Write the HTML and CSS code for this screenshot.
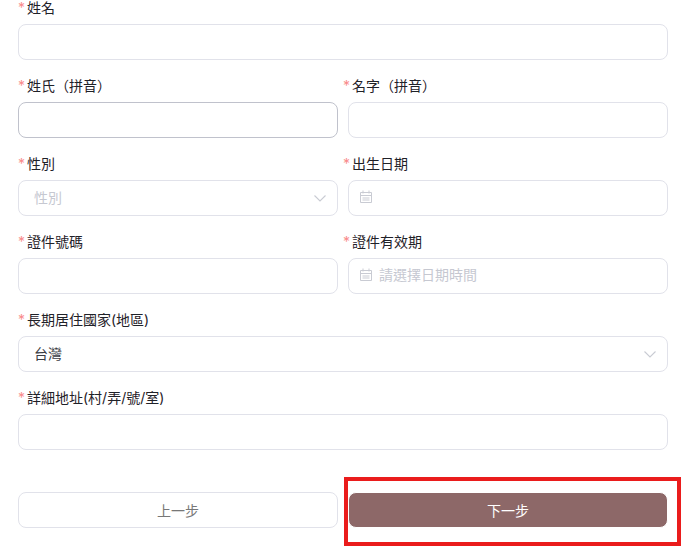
FILE: index.html
```html
<!DOCTYPE html>
<html lang="zh-Hant">
<head>
    <meta charset="UTF-8">
    <title>證件資料</title>
    <link rel="stylesheet" href="styles.css">
</head>
<body>
    <form class="form">
        <div class="field">
            <label class="label"><span class="req">*</span>姓名</label>
            <div class="box"></div>
        </div>
        <div class="row">
            <div class="field">
                <label class="label"><span class="req">*</span>姓氏（拼音）</label>
                <div class="box focus"></div>
            </div>
            <div class="field">
                <label class="label"><span class="req">*</span>名字（拼音）</label>
                <div class="box"></div>
            </div>
        </div>
        <div class="row">
            <div class="field">
                <label class="label"><span class="req">*</span>性別</label>
                <div class="box select">
                    <span class="placeholder">性別</span>
                    <svg class="chevron" width="14" height="14" viewBox="0 0 14 14" fill="none"><path d="M1.5 4.5L7 10l5.5-5.5" stroke="#c9cbd3" stroke-width="1.1"/></svg>
                </div>
            </div>
            <div class="field">
                <label class="label"><span class="req">*</span>出生日期</label>
                <div class="box date">
                    <svg class="cal" width="14" height="14" viewBox="0 0 14 14" fill="none"><path d="M1.5 2.5h11v10h-11zM1.5 5.5h11M4 .5v3M10 .5v3M3.5 8h7M3.5 10h7" stroke="#c9cbd3"/></svg>
                </div>
            </div>
        </div>
        <div class="row">
            <div class="field">
                <label class="label"><span class="req">*</span>證件號碼</label>
                <div class="box"></div>
            </div>
            <div class="field">
                <label class="label"><span class="req">*</span>證件有效期</label>
                <div class="box date">
                    <svg class="cal" width="14" height="14" viewBox="0 0 14 14" fill="none"><path d="M1.5 2.5h11v10h-11zM1.5 5.5h11M4 .5v3M10 .5v3M3.5 8h7M3.5 10h7" stroke="#c9cbd3"/></svg>
                    <span class="placeholder">請選擇日期時間</span>
                </div>
            </div>
        </div>
        <div class="field">
            <label class="label"><span class="req">*</span>長期居住國家(地區)</label>
            <div class="box select">
                <span class="value">台灣</span>
                <svg class="chevron" width="14" height="14" viewBox="0 0 14 14" fill="none"><path d="M1.5 4.5L7 10l5.5-5.5" stroke="#c9cbd3" stroke-width="1.1"/></svg>
            </div>
        </div>
        <div class="field">
            <label class="label"><span class="req">*</span>詳細地址(村/弄/號/室)</label>
            <div class="box"></div>
        </div>
        <div class="actions">
            <button type="button" class="btn prev">上一步</button>
            <div class="next-mark">
                <button type="button" class="btn next">下一步</button>
            </div>
        </div>
    </form>
</body>
</html>
```

FILE: styles.css
```css
html, body {
    margin: 0;
    padding: 0;
    background-color: #fff;
}
body {
    width: 684px;
    height: 547px;
    overflow: hidden;
    font-family: Inter, "Noto Sans CJK TC", sans-serif;
    font-size: 14px;
    color: #1f2128;
}
.form {
    display: flex;
    flex-direction: column;
    gap: 18px;
    padding: 0 16px 0 18px;
}
.row {
    display: flex;
    gap: 10px;
}
.row .field {
    flex: 1;
    min-width: 0;
}
.label {
    display: block;
    height: 24px;
    line-height: 16px;
    white-space: nowrap;
}
.row .field + .field .label {
    margin-left: -5px;
}
.req {
    color: #f98b8b;
    margin-right: 2px;
}
.box {
    box-sizing: border-box;
    height: 36px;
    border: 1px solid #e1e2ea;
    border-radius: 8px;
    background-color: #fff;
    display: flex;
    align-items: center;
}
.box.focus {
    border-color: #c0c2cc;
}
.select {
    justify-content: space-between;
    padding: 0 10px 0 15px;
}
.select span {
    margin-bottom: 2px;
}
.date {
    padding: 0 10px;
    gap: 6px;
}
.date span {
    margin-bottom: 4px;
}
.cal {
    margin-bottom: 3px;
}
.placeholder {
    color: #c6c8d1;
}
.value {
    color: #3a3c44;
}
.actions {
    display: flex;
    gap: 10px;
    margin-top: 24px;
}
.btn {
    box-sizing: border-box;
    width: 100%;
    height: 36px;
    border-radius: 8px;
    font-family: inherit;
    font-size: 14px;
    padding: 0;
}
.prev {
    flex: none;
    width: 320px;
    border: 1px solid #e1e2ea;
    background-color: #fff;
    color: #777;
}
.next-mark {
    position: relative;
    flex: 1;
}
.next-mark::after {
    content: "";
    position: absolute;
    left: -4px;
    top: -15px;
    width: 337px;
    height: 69px;
    box-sizing: border-box;
    border: 4px solid #ea1c1c;
}
.next {
    display: block;
    border: 1px solid #fff;
    background-color: #8d6868;
    color: #fff;
}
```
